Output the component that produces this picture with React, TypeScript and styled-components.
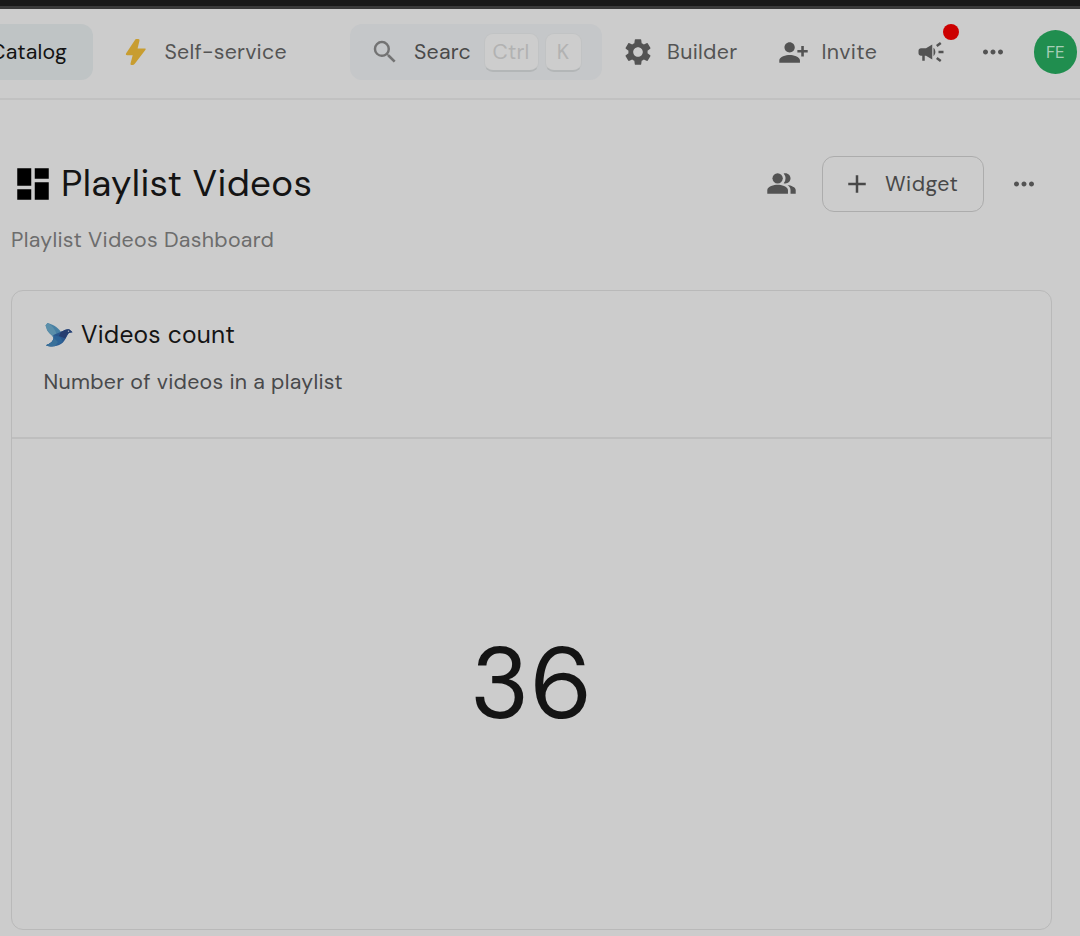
import React from "react";
import styled, { createGlobalStyle } from "styled-components";
import {
  MdAdd,
  MdCampaign,
  MdDashboard,
  MdMoreHoriz,
  MdPeopleAlt,
  MdPersonAddAlt1,
  MdSearch,
  MdSettings,
} from "react-icons/md";

const GlobalStyle = createGlobalStyle`
  * { box-sizing: border-box; }
  body {
    margin: 0;
    background: #cccccc;
    font-family: "DM Sans", Inter, "Liberation Sans", sans-serif;
    font-optical-sizing: none;
    color: #141414;
    overflow: hidden;
  }
  svg { display: block; flex: none; }
`;

const Page = styled.div`
  height: 936px;
  width: 1080px;
  overflow: hidden;
`;

const WindowEdge = styled.div`
  height: 9px;
  background: #191919;
  border-bottom: 3px solid #3a3a3a;
`;

const TopBar = styled.header`
  height: 91px;
  display: flex;
  align-items: center;
  padding-bottom: 3px;
  border-bottom: 2px solid #c1c1c1;
`;

const Label = styled.span<{ $size: number; $track?: number; $color?: string; $weight?: number }>`
  font-size: ${(p) => p.$size}px;
  letter-spacing: ${(p) => p.$track ?? 0.25}px;
  color: ${(p) => p.$color ?? "#545454"};
  font-weight: ${(p) => p.$weight ?? 380};
  line-height: 1.3;
  padding-top: 1px;
  white-space: nowrap;
`;

const CatalogTab = styled.div`
  width: 93px;
  height: 56px;
  flex: none;
  display: flex;
  align-items: center;
  justify-content: flex-end;
  padding-right: 26px;
  background: #bfc4c5;
  border-radius: 0 12px 12px 0;
`;

const NavItem = styled.div<{ $width: number; $gap: number; $before: number }>`
  width: ${(p) => p.$width}px;
  margin-left: ${(p) => p.$before}px;
  gap: ${(p) => p.$gap}px;
  flex: none;
  display: flex;
  align-items: center;
  color: #535353;
`;

const SearchBox = styled.div`
  width: 252px;
  height: 56px;
  margin-left: 51px;
  padding-left: 20px;
  flex: none;
  display: flex;
  align-items: center;
  background: #c5c7c9;
  border-radius: 12px;
  color: #737373;
`;

const SearchText = styled.div`
  display: flex;
  width: 69.5px;
  margin-left: 14px;
  flex: none;
`;

const Key = styled.kbd<{ $width: number }>`
  width: ${(p) => p.$width}px;
  height: 39px;
  margin: 1px 6px 0 0;
  flex: none;
  display: flex;
  align-items: center;
  justify-content: center;
  font-family: inherit;
  background: #cdcdcd;
  border: 1px solid #c1c3c4;
  border-bottom: 2px solid #b3b6b7;
  border-radius: 9px;
`;

const NewsButton = styled.div`
  position: relative;
  width: 30px;
  margin-left: 35px;
  flex: none;
  color: #535353;
`;

const Badge = styled.span`
  position: absolute;
  top: -13.5px;
  right: -13.8px;
  width: 16px;
  height: 16px;
  border-radius: 50%;
  background: #cc0000;
`;

const Avatar = styled.div`
  width: 43.5px;
  height: 43.5px;
  margin-left: 25.5px;
  flex: none;
  display: flex;
  align-items: center;
  justify-content: center;
  border-radius: 50%;
  background: #208e4f;
`;

const Main = styled.main`
  padding: 55px 28px 0 11px;
`;

const TitleRow = styled.div`
  height: 57px;
  display: flex;
  align-items: center;
  color: #535353;
`;

const Title = styled.h1`
  margin: 0;
  width: 754.5px;
  display: flex;
  align-items: center;
  gap: 7px;
  padding-left: 1px;
  color: #000000;

  svg {
    margin-top: 1px;
  }
`;

const WidgetButton = styled.button`
  width: 162px;
  height: 56px;
  margin: 0 25px 0 25.5px;
  padding: 0 0 0 19px;
  display: flex;
  align-items: center;
  gap: 13px;
  font-family: inherit;
  color: #484848;
  background: transparent;
  border: 1.5px solid #acacac;
  border-radius: 12px;

  span {
    padding-top: 2px;
  }
`;

const Subtitle = styled.p`
  margin: 13px 0 0;
  height: 30px;
  display: flex;
  align-items: center;
`;

const Card = styled.section`
  margin-top: 35px;
  height: 640px;
  display: flex;
  flex-direction: column;
  border: 1.5px solid #b9b9b9;
  border-radius: 12px;
`;

const CardHeader = styled.div`
  height: 148px;
  padding: 26px 0 0 31.5px;
  border-bottom: 2px solid #bebebe;
`;

const CardTitle = styled.div`
  height: 36px;
  display: flex;
  align-items: center;
  gap: 8.5px;
`;

const CardText = styled.div`
  height: 30px;
  margin-top: 14px;
  display: flex;
  align-items: center;
`;

const CardBody = styled.div`
  flex: 1;
  display: flex;
  align-items: center;
  justify-content: center;
  padding-bottom: 2px;
`;

function Bolt() {
  return (
    <svg width="22" height="28" viewBox="0 0 22 28">
      <path
        d="M9.800 2.200Q10.300 1 11.500 1H13.300Q14.800 1 14.500 2.500L12.600 10.500H19.900Q21.400 10.500 20.500 11.800L9.800 25.800Q8.800 27 7.500 27H6.600Q5.200 27 5.500 25.500L7.700 17.300H2Q.3 17.300 1 15.600Z"
        fill="#c89d30"
      />
    </svg>
  );
}

function Bird() {
  return (
    <svg width="29" height="24" viewBox="0 0 29 24">
      <path d="M3.500 0C8 1 14 4 17 9L9.500 15C8 11.500 3 9.500 2.500 5L1.500 2.500Z" fill="#4780a4" />
      <path d="M3.500 0C8 2 11 6 12.500 11L9.500 14.500C7 10.500 3 8.500 2.500 5L1.500 2.500Z" fill="#5b8faa" />
      <path d="M9.500 12L17 8.800C20 7.500 22 6 24.500 6.200C26 6.400 26.500 7.500 28.500 9.200L25.500 9.800C22.500 11 22 20 14.500 22.300C10 24 5 23.600 2 22.200C6.500 20.500 10.500 18 9.500 12Z" fill="#2a568c" />
      <path d="M17 8.800C20 7.500 22 6 24.500 6.200C26 6.400 26.500 7.500 28.500 9.200L25.500 9.800C23.500 10.500 22.500 13 21.500 15.500L15 13Z" fill="#263d70" />
      <path d="M9.500 12L16 14 19 18.500C15 23 7 24.300 2 22.200C6.500 20.500 10.500 18 9.500 12Z" fill="#2d6397" />
      <path d="M9.800 15L14 19 11 23.200C7 23.600 4 23.300 2 22.200C6 20.700 9.300 19 9.800 15Z" fill="#397099" />
      <circle cx="24.500" cy="8.300" r=".7" fill="#a6b2be" />
    </svg>
  );
}

export default function App() {
  return (
    <Page>
      <GlobalStyle />
      <WindowEdge />
      <TopBar>
        <CatalogTab>
          <Label $size={21.3} $track={0.2} $color="#141414">Catalog</Label>
        </CatalogTab>
        <NavItem $width={174} $gap={17.5} $before={32}>
          <Bolt />
          <Label $size={21.3}>Self-service</Label>
        </NavItem>
        <SearchBox>
          <MdSearch size={30} />
          <SearchText>
            <Label $size={21.3} $color="#4a4a4a">Searc</Label>
          </SearchText>
          <Key $width={55}>
            <Label $size={21.3} $color="#b2b2b2">Ctrl</Label>
          </Key>
          <Key $width={37}>
            <Label $size={21.3} $color="#b2b2b2">K</Label>
          </Key>
        </SearchBox>
        <NavItem $width={117} $gap={13} $before={20}>
          <MdSettings size={32} />
          <Label $size={21.3} $track={0.3}>Builder</Label>
        </NavItem>
        <NavItem $width={103} $gap={13} $before={38.5}>
          <MdPersonAddAlt1 size={31} />
          <Label $size={21.3} $track={0.35}>Invite</Label>
        </NavItem>
        <NewsButton>
          <MdCampaign size={30} />
          <Badge />
        </NewsButton>
        <NavItem $width={30} $gap={0} $before={32.5}>
          <MdMoreHoriz size={30} />
        </NavItem>
        <Avatar>
          <Label $size={17} $color="#a6cdb6" $track={0}>FE</Label>
        </Avatar>
      </TopBar>
      <Main>
        <TitleRow>
          <Title>
            <MdDashboard size={42} />
            <Label $size={36.8} $track={0.35} $color="#141414">Playlist Videos</Label>
          </Title>
          <MdPeopleAlt size={31} />
          <WidgetButton>
            <MdAdd size={30} />
            <Label $size={21.3} $track={0.45} $color="#484848">Widget</Label>
          </WidgetButton>
          <MdMoreHoriz size={30} />
        </TitleRow>
        <Subtitle>
          <Label $size={21.3} $track={0.3} $color="#6d6d6d">Playlist Videos Dashboard</Label>
        </Subtitle>
        <Card>
          <CardHeader>
            <CardTitle>
              <Bird />
              <Label $size={24.5} $color="#141414">Videos count</Label>
            </CardTitle>
            <CardText>
              <Label $size={21.3} $track={0.28} $color="#48494b">Number of videos in a playlist</Label>
            </CardText>
          </CardHeader>
          <CardBody>
            <Label $size={100} $weight={400} $track={0} $color="#141414">36</Label>
          </CardBody>
        </Card>
      </Main>
    </Page>
  );
}
